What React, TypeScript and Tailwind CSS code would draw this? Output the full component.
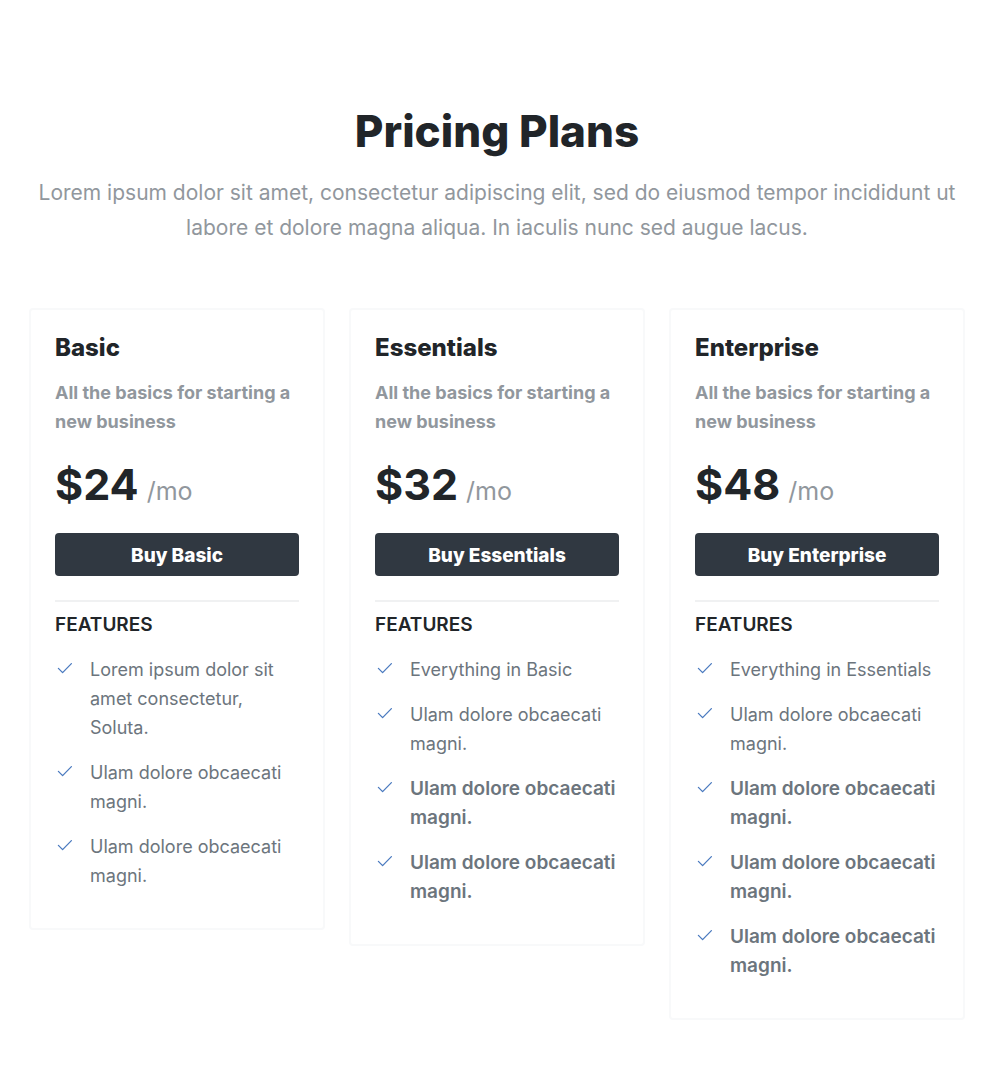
type Feature = { text: string; bold?: boolean };
type Plan = { name: string; price: string; features: Feature[] };

const ulam = "Ulam dolore obcaecati magni.";

const plans: Plan[] = [
  {
    name: "Basic",
    price: "$24",
    features: [
      { text: "Lorem ipsum dolor sit amet consectetur, Soluta." },
      { text: ulam },
      { text: ulam },
    ],
  },
  {
    name: "Essentials",
    price: "$32",
    features: [
      { text: "Everything in Basic" },
      { text: ulam },
      { text: ulam, bold: true },
      { text: ulam, bold: true },
    ],
  },
  {
    name: "Enterprise",
    price: "$48",
    features: [
      { text: "Everything in Essentials" },
      { text: ulam },
      { text: ulam, bold: true },
      { text: ulam, bold: true },
      { text: ulam, bold: true },
    ],
  },
];

function Check() {
  return (
    <svg className="mt-[3px] h-5 w-5 shrink-0" viewBox="0 0 20 20" fill="none" stroke="#4a7abf" strokeWidth="1.3" aria-hidden="true">
      <path d="M3.4 10.4 7.6 14.6 16.4 5.6" strokeLinecap="round" strokeLinejoin="round" />
    </svg>
  );
}

function PlanCard({ plan }: { plan: Plan }) {
  return (
    <article className="rounded-sm border-2 border-[#f8f9fa] px-6 pt-6 pb-[38px]">
      <h2 className="text-2xl leading-7 font-extrabold text-[#212529]">{plan.name}</h2>
      <p className="mt-4 text-lg leading-[29px] font-bold text-[#91979d]">
        All the basics for starting a new business
      </p>
      <p className="mt-[22px] flex items-baseline gap-2 leading-[52px] text-[#91979d]">
        <span className="text-[43px] font-bold text-[#212529]">{plan.price}</span>
        <span className="text-[25px]">/mo</span>
      </p>
      <button type="button" className="mt-4 h-[43px] w-full rounded-sm bg-[#303841] pt-[3px] text-[19px] font-extrabold text-white">
        Buy {plan.name}
      </button>
      <hr className="mt-6 border-t-2 border-[#f0f1f2]" />
      <h3 className="mt-2 text-[19px] leading-[29px] font-semibold text-[#212529]">FEATURES</h3>
      <ul className="mt-4 flex flex-col gap-4 text-lg leading-[29px] text-[#6c757d]">
        {plan.features.map((feature, i) => (
          <li key={i} className="flex gap-[15px]">
            <Check />
            <span className={feature.bold ? "text-[19px] leading-[29px] font-semibold" : ""}>{feature.text}</span>
          </li>
        ))}
      </ul>
    </article>
  );
}

export default function App() {
  return (
    <main className="min-h-screen bg-white px-[29px] pt-[104px] pb-14 font-['Inter',sans-serif]">
      <header className="text-center">
        <h1 className="text-[44px] leading-[54px] font-extrabold text-[#212529]">Pricing Plans</h1>
        <p className="mt-[17px] text-[21px] leading-[35px] text-[#91979d]">
          Lorem ipsum dolor sit amet, consectetur adipiscing elit, sed do eiusmod tempor incididunt ut labore et dolore magna aliqua. In iaculis nunc sed augue lacus.
        </p>
      </header>
      <section className="mt-[63px] grid grid-cols-3 items-start gap-6">
        {plans.map((plan) => (
          <PlanCard key={plan.name} plan={plan} />
        ))}
      </section>
    </main>
  );
}
